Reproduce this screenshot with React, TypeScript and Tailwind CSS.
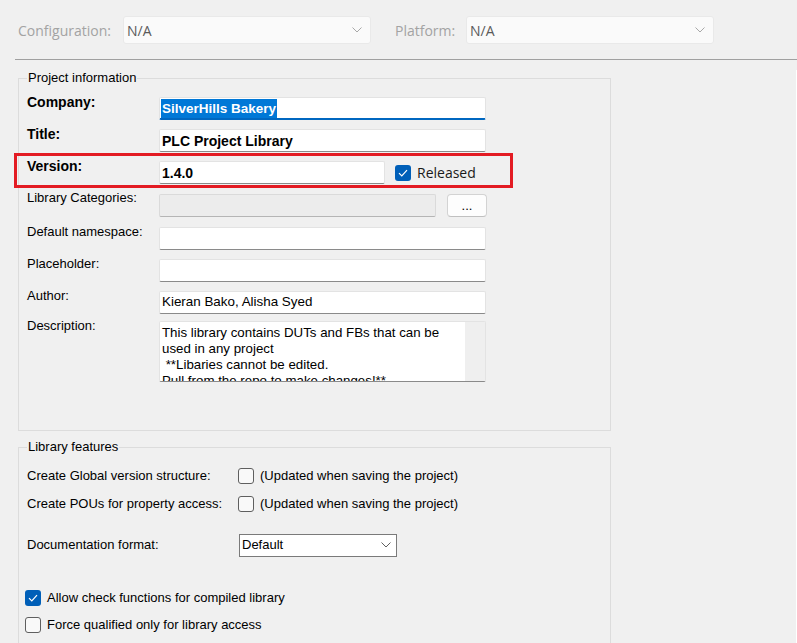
const Chevron = ({ color = "#8a8a8a" }: { color?: string }) => (
  <svg width="10" height="6" viewBox="0 0 10 6" fill="none">
    <path d="M0.5 0.5 L5 5 L9.5 0.5" stroke={color} strokeWidth="1" />
  </svg>
);

const Tick = () => (
  <svg width="10" height="8" viewBox="0 0 10 8" fill="none">
    <path d="M1 4.2 L3.8 7 L9 1.2" stroke="white" strokeWidth="1.2" />
  </svg>
);

function Checkbox({ checked }: { checked?: boolean }) {
  if (checked) {
    return (
      <span className="flex h-4 w-4 shrink-0 items-center justify-center rounded-[3px] bg-[#005fb8]">
        <Tick />
      </span>
    );
  }
  return <span className="h-4 w-4 shrink-0 rounded-[3px] border border-[#5f5f5f] bg-[#f9f9f9]" />;
}

function TopDropdown() {
  return (
    <div className="flex h-[28px] w-[248px] items-center justify-between rounded-[3px] border border-[#e9e9e9] bg-[#fafafa] pl-[3px] pr-[8px] font-['Open_Sans',sans-serif] text-[14px] text-[#5a5a5a]">
      <span>N/A</span>
      <Chevron color="#a8a8a8" />
    </div>
  );
}

const field = "h-[23px] rounded-[2px] border border-[#e3e3e3] border-b-[#8a8a8a] bg-white";

export default function App() {
  return (
    <div className="relative h-[643px] w-[797px] overflow-hidden bg-[#f0f0f0] font-['Liberation_Sans',Arial,sans-serif] text-[13px] text-black">
      {/* configuration bar */}
      <div className="flex items-center pl-[18px] pt-4">
        <span className="w-[105px] font-['Open_Sans',sans-serif] text-[14px] text-[#a3a3a3]">Configuration:</span>
        <TopDropdown />
        <span className="ml-6 w-[71px] font-['Open_Sans',sans-serif] text-[14px] text-[#a3a3a3]">Platform:</span>
        <TopDropdown />
      </div>
      <div className="ml-[15px] mt-[15px] h-px bg-[#a0a0a0]" />

      <div className="h-full border-r border-white">
        {/* project information */}
        <fieldset className="ml-[18px] mt-[10px] h-[361px] w-[593px] border border-[#dcdcdc] px-2 pt-2">
          <legend className="px-px leading-4">Project information</legend>

          <div className="flex h-[32px] items-start">
            <span className="w-[132px] text-[14px] font-bold leading-4">Company:</span>
            <div className={"mt-[3px] flex w-[327px] items-center pl-[1px] " + field + " border-b-2 border-b-[#0067c0]"}>
              <span className="bg-[#0078d7] px-px text-[13.5px] font-bold leading-[19px] text-white">SilverHills Bakery</span>
            </div>
          </div>

          <div className="flex h-[32px] items-start">
            <span className="w-[132px] text-[14px] font-bold leading-4">Title:</span>
            <div className={"mt-[3px] flex w-[327px] items-center pl-[2px] pt-px text-[14px] font-bold " + field}>PLC Project Library</div>
          </div>

          <div className="flex h-[33px] items-start">
            <span className="w-[132px] text-[14px] font-bold leading-4">Version:</span>
            <div className="mt-[3px] flex h-[23px] items-center">
              <div className={"flex w-[226px] items-center pl-[2px] pt-px text-[14px] font-bold " + field}>1.4.0</div>
              <span className="ml-[10px]">
                <Checkbox checked />
              </span>
              <span className="ml-[6px] font-['Open_Sans',sans-serif] text-[14px] text-[#1a1a1a]">Released</span>
            </div>
          </div>

          <div className="flex h-[33px] items-start">
            <span className="-mt-px w-[132px] leading-4">Library Categories:</span>
            <div className="mt-[3px] flex items-start">
              <div className="h-[23px] w-[277px] rounded-[2px] border border-[#dadada] border-b-[#b5b5b5] bg-[#ececec]" />
              <div className="ml-[11px] flex h-[23px] w-[40px] items-end justify-center rounded-[4px] border border-[#d3d3d3] border-b-[#c0c0c0] bg-[#fdfdfd] pb-[2px] leading-4">...</div>
            </div>
          </div>

          <div className="flex h-[32px] items-start">
            <span className="w-[132px] leading-4">Default namespace:</span>
            <div className={"mt-[3px] w-[327px] " + field} />
          </div>

          <div className="flex h-[32px] items-start">
            <span className="w-[132px] leading-4">Placeholder:</span>
            <div className={"mt-[3px] w-[327px] " + field} />
          </div>

          <div className="flex h-[30px] items-start">
            <span className="w-[132px] leading-4">Author:</span>
            <div className={"mt-[3px] flex w-[327px] items-center pl-[2px] text-[13.4px] " + field}>Kieran Bako, Alisha Syed</div>
          </div>

          <div className="flex items-start">
            <span className="w-[132px] leading-4">Description:</span>
            <div className="mt-[3px] flex h-[61px] w-[327px] rounded-[2px] border border-[#e3e3e3] border-b-[#8a8a8a] bg-white">
              <div className="flex-1 overflow-hidden whitespace-pre pl-[2px] pt-[3px] text-[13.3px] leading-4">
                {"This library contains DUTs and FBs that can be\nused in any project\n **Libaries cannot be edited.\nPull from the repo to make changes!**"}
              </div>
              <div className="w-[20px] bg-[#efefef]" />
            </div>
          </div>
        </fieldset>

        {/* library features */}
        <fieldset className="ml-[18px] mt-[8px] h-[230px] w-[593px] border border-[#dcdcdc] px-2 pt-[7px]">
          <legend className="px-px leading-4">Library features</legend>

          <div className="flex h-[28px] items-center">
            <span className="w-[211px]">Create Global version structure:</span>
            <Checkbox />
            <span className="ml-[6px]">(Updated when saving the project)</span>
          </div>
          <div className="flex h-[28px] items-center">
            <span className="w-[211px]">Create POUs for property access:</span>
            <Checkbox />
            <span className="ml-[6px]">(Updated when saving the project)</span>
          </div>

          <div className="mt-[15px] flex h-[24px] items-center">
            <span className="w-[212px]">Documentation format:</span>
            <div className="flex h-[23px] w-[158px] items-center justify-between border border-[#7a7a7a] bg-white pl-[2px] pr-[5px]">
              <span>Default</span>
              <Chevron color="#606060" />
            </div>
          </div>

          <div className="-ml-[2px] mt-[27px] flex h-[27px] items-center gap-[6px]">
            <Checkbox checked />
            <span>Allow check functions for compiled library</span>
          </div>
          <div className="-ml-[2px] flex h-[27px] items-center gap-[6px]">
            <Checkbox />
            <span>Force qualified only for library access</span>
          </div>
        </fieldset>
      </div>

      {/* annotation */}
      <div className="absolute left-[14px] top-[153px] h-[35px] w-[499px] border-[3px] border-[#e31b23]" />
    </div>
  );
}
